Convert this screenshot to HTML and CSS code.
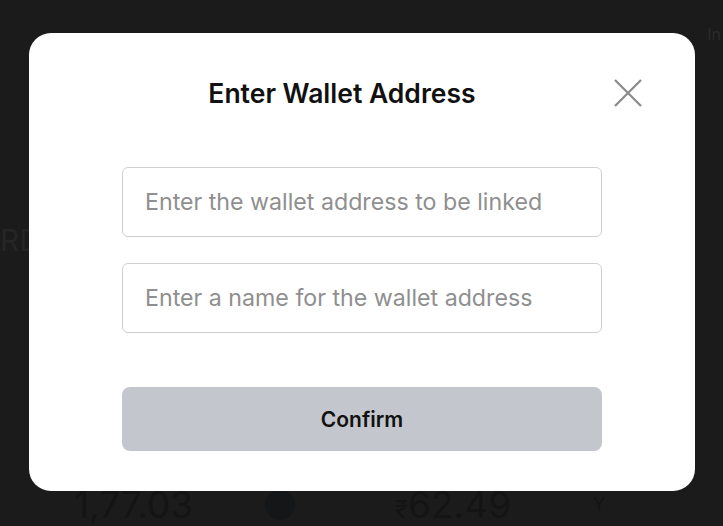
FILE: index.html
```html
<!doctype html>
<html>
<head>
    <title>Wallet</title>
    <link rel="stylesheet" href="styles.css">
</head>

<body>
    <div class="page">
        <div class="bg-top">In</div>
        <div class="bg-left">RD</div>
        <div class="bg-bottom">
            <span class="num">1,77.03</span>
            <span class="dot"></span>
            <span class="num"><span class="cur">&#8377;</span>62.49</span>
            <span class="num small">Y</span>
        </div>
    </div>

    <div class="overlay">
        <div class="modal">
            <div class="modal-head">
                <h2 class="modal-title">Enter Wallet Address</h2>
                <button class="close-btn" aria-label="Close">
                    <svg width="28" height="28" viewBox="0 0 28 28">
                        <path d="M1 1 L27 27 M27 1 L1 27" stroke="#8a8a8a" stroke-width="2.2" fill="none" />
                    </svg>
                </button>
            </div>
            <div class="modal-body">
                <input class="field" type="text" placeholder="Enter the wallet address to be linked" />
                <input class="field" type="text" placeholder="Enter a name for the wallet address" />
                <button class="confirm">Confirm</button>
            </div>
        </div>
    </div>
</body>
</html>
```

FILE: styles.css
```css
html, body {
    margin: 0;
    height: 100%;
}
body {
    background-color: #1b1b1b;
    font-family: Inter, "Noto Sans", sans-serif;
    overflow: hidden;
    position: relative;
}
.page {
    height: 100%;
    color: #141414;
}
.bg-top {
    position: absolute;
    right: 2px;
    top: 24px;
    font-size: 16px;
    color: #2b2b2b;
}
.bg-left {
    position: absolute;
    left: 0;
    top: 222px;
    font-size: 30px;
    color: #252525;
}
.bg-bottom {
    position: absolute;
    left: 74px;
    top: 482px;
    display: flex;
    align-items: center;
    font-size: 37px;
}
.bg-bottom .dot {
    width: 30px;
    height: 30px;
    border-radius: 50%;
    background: #151618;
    margin: 0 100px 0 72px;
}
.bg-bottom .cur {
    font-size: 24px;
}
.bg-bottom .small {
    font-size: 18px;
    margin-left: 82px;
}

.overlay {
    position: absolute;
    inset: 0;
    padding: 33px 28px 35px 29px;
    display: flex;
}
.modal {
    flex: 1;
    background: #ffffff;
    border-radius: 22px;
    padding: 44px 54px 40px 54px;
    display: flex;
    flex-direction: column;
}
.modal-head {
    display: flex;
    align-items: center;
}
.modal-title {
    flex: 1;
    margin: 0;
    text-align: center;
    font-size: 26.5px;
    line-height: 32px;
    font-weight: 600;
    color: #111111;
}
.close-btn {
    background: none;
    border: none;
    padding: 0;
    width: 28px;
    height: 28px;
    margin-left: 13px;
    margin-right: -1px;
    cursor: pointer;
}
.modal-body {
    display: flex;
    flex-direction: column;
    align-items: center;
    padding-top: 58px;
}
.field {
    width: 480px;
    height: 70px;
    box-sizing: border-box;
    border: 1px solid #cfcfcf;
    border-radius: 6px;
    padding: 0 22px;
    font-family: Inter, "Noto Sans", sans-serif;
    font-size: 23.2px;
    color: #111111;
    margin-bottom: 26px;
    outline: none;
}
.field::placeholder {
    color: #8f8f8f;
}
.confirm {
    width: 480px;
    height: 64px;
    margin-top: 28px;
    border: none;
    border-radius: 8px;
    background: #c3c7cd;
    font-family: Inter, "Noto Sans", sans-serif;
    font-size: 21px;
    font-weight: 600;
    color: #111111;
}
```
